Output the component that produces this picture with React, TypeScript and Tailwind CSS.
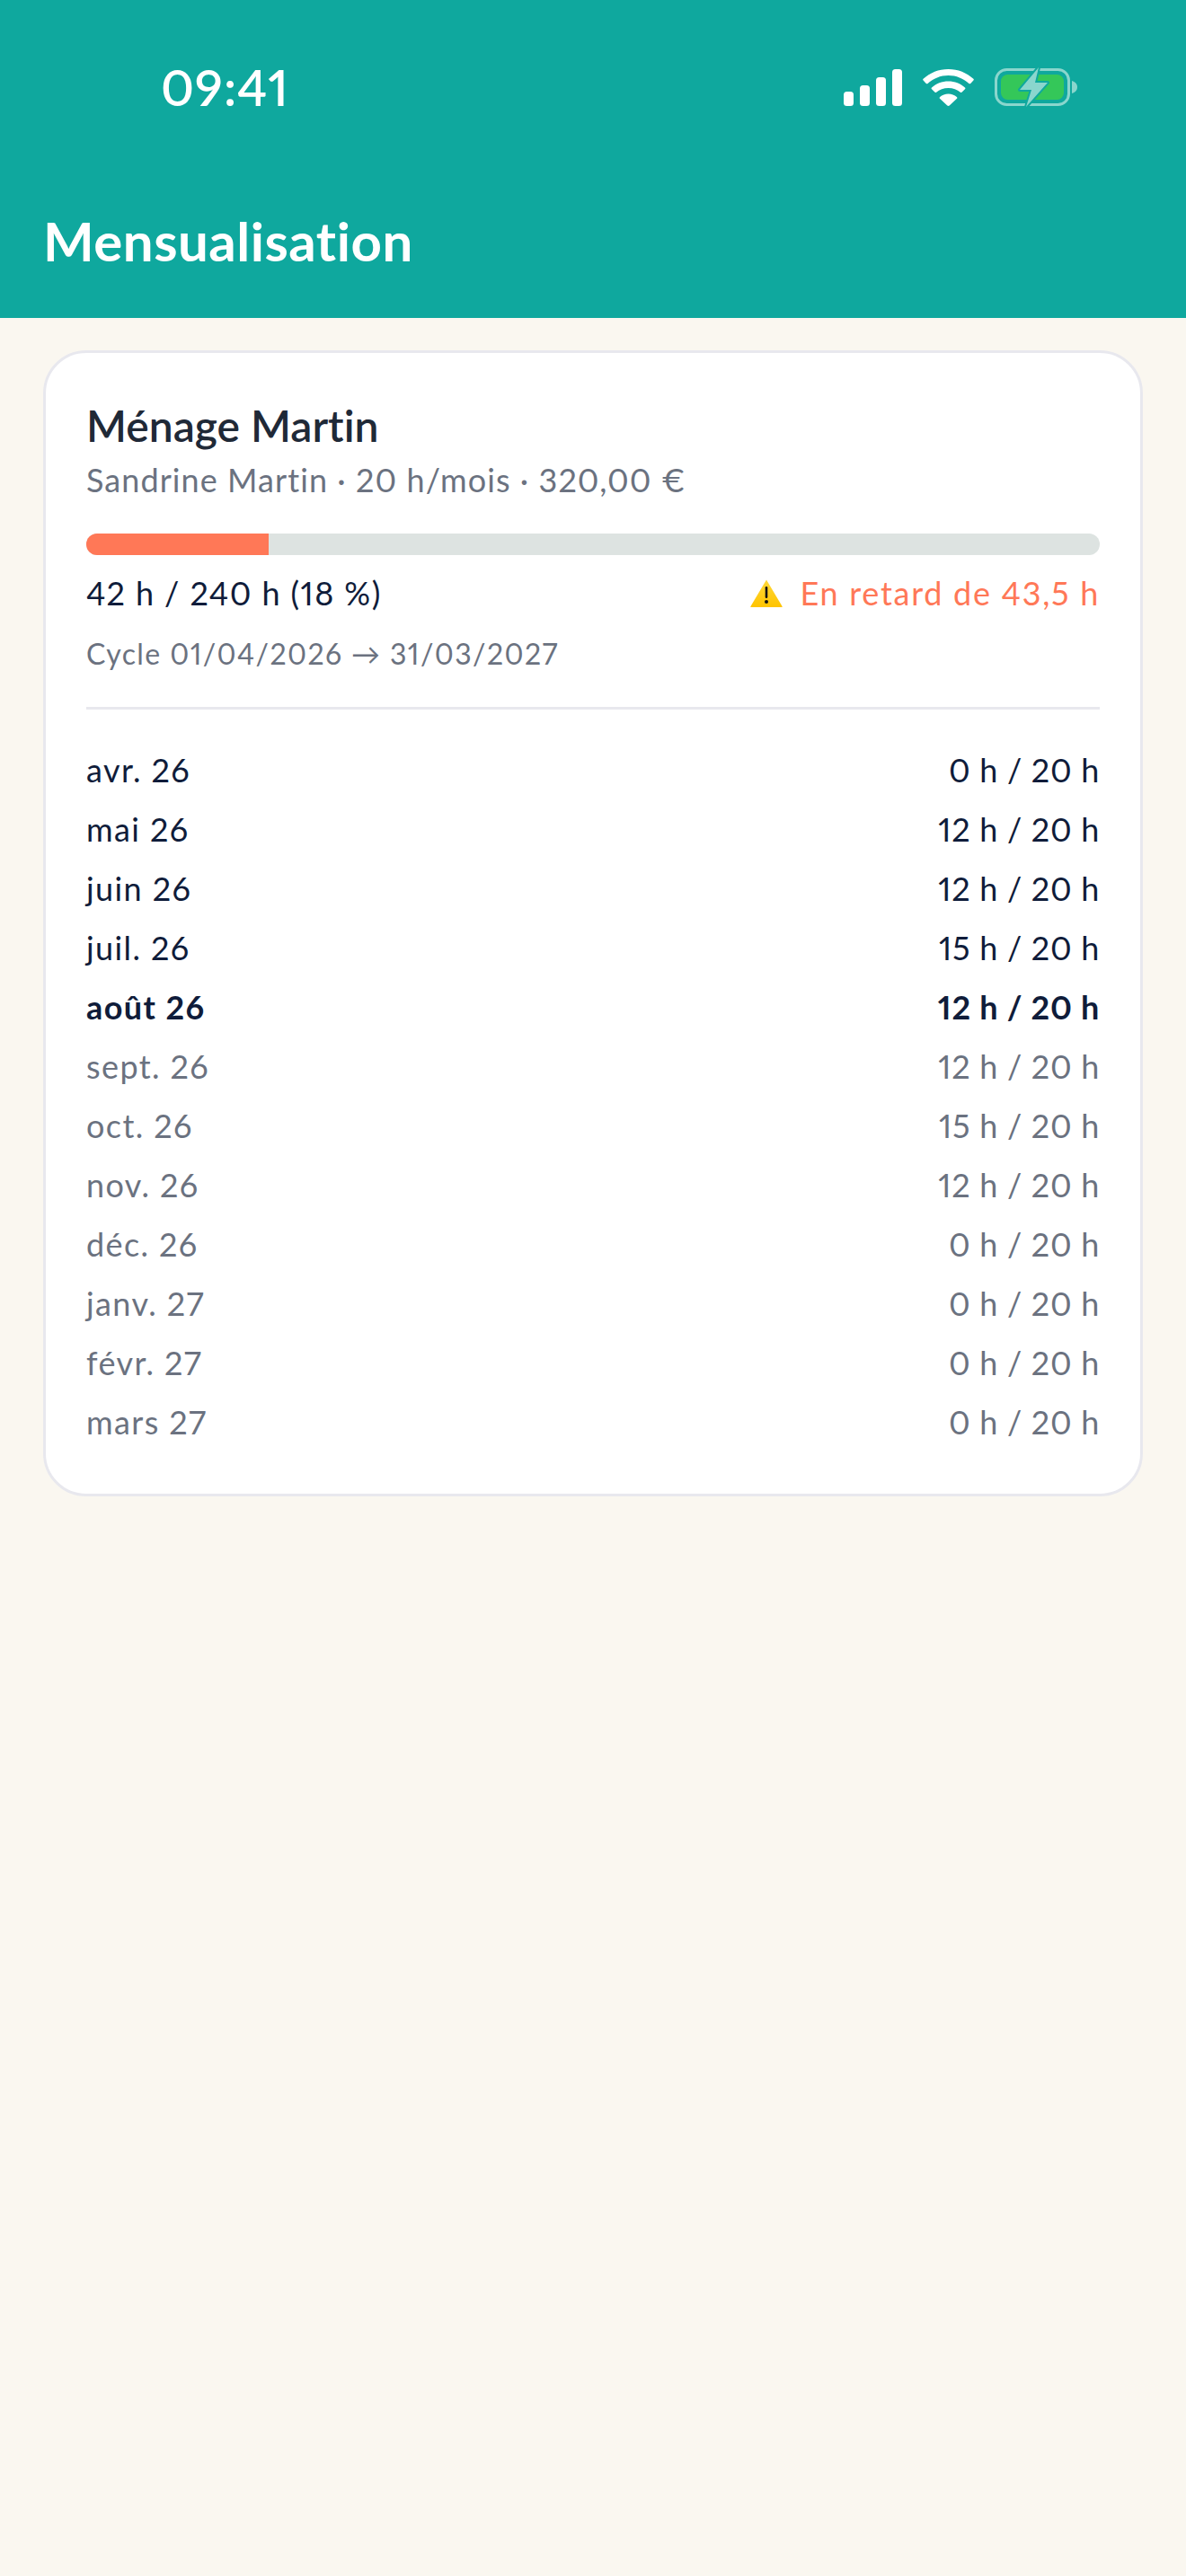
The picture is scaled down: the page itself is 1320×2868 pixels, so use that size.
const MOIS = [
  { label: 'avr. 26', heures: '0 h / 20 h', etat: 'passe' },
  { label: 'mai 26', heures: '12 h / 20 h', etat: 'passe' },
  { label: 'juin 26', heures: '12 h / 20 h', etat: 'passe' },
  { label: 'juil. 26', heures: '15 h / 20 h', etat: 'passe' },
  { label: 'août 26', heures: '12 h / 20 h', etat: 'courant' },
  { label: 'sept. 26', heures: '12 h / 20 h', etat: 'futur' },
  { label: 'oct. 26', heures: '15 h / 20 h', etat: 'futur' },
  { label: 'nov. 26', heures: '12 h / 20 h', etat: 'futur' },
  { label: 'déc. 26', heures: '0 h / 20 h', etat: 'futur' },
  { label: 'janv. 27', heures: '0 h / 20 h', etat: 'futur' },
  { label: 'févr. 27', heures: '0 h / 20 h', etat: 'futur' },
  { label: 'mars 27', heures: '0 h / 20 h', etat: 'futur' },
]

const COULEURS: Record<string, string> = {
  passe: 'text-[#0f1c3a]',
  courant: 'text-[#0f1c3a] font-bold',
  futur: 'text-[#6b7280]',
}

function StatusIcons() {
  return (
    <div className="flex items-center gap-[23px]">
      <svg width="65" height="41" viewBox="0 0 65 41" fill="#fff" aria-hidden>
        <rect x="0" y="25" width="11" height="16" rx="3.5" />
        <rect x="18" y="18" width="11" height="23" rx="3.5" />
        <rect x="36" y="9" width="11" height="32" rx="3.5" />
        <rect x="54" y="0" width="11" height="41" rx="3.5" />
      </svg>
      <svg width="57" height="41" viewBox="0 0 57 41" fill="#fff" aria-hidden>
        <path d="M28.5 0C17.8 0 8 4 .6 10.8c-.6.5-.6 1.2 0 1.8l3.2 3.3c.5.5 1.2.5 1.8 0C11.700 10.400 19.700 7 28.500 7s16.800 3.400 22.900 8.900c.6.5 1.300.5 1.800 0l3.200-3.300c.6-.6.6-1.300 0-1.800C49 4 39.200 0 28.500 0z" />
        <path d="M28.500 13.500c-7.100 0-13.500 2.600-18.500 7-.6.500-.6 1.200 0 1.800l3.300 3.300c.5.500 1.200.500 1.800.1 3.600-3 8.200-4.800 13.400-4.800s9.800 1.800 13.400 4.800c.6.400 1.300.400 1.800-.1l3.300-3.300c.6-.6.600-1.300 0-1.800-5-4.400-11.400-7-18.500-7z" />
        <path d="M28.500 27.500c-3.600 0-6.900 1.300-9.400 3.500-.6.500-.6 1.200-.1 1.800l8.300 7.700c.7.600 1.700.600 2.400 0l8.300-7.700c.5-.6.500-1.300-.1-1.800-2.500-2.200-5.800-3.500-9.400-3.500z" />
      </svg>
      <svg width="93" height="44" viewBox="0 0 93 44" fill="none" aria-hidden>
        <rect x="1.500" y="2.500" width="81" height="39" rx="12" stroke="#8ad6cd" strokeWidth="3" />
        <rect x="7" y="8" width="70" height="28" rx="7.500" fill="#34c759" />
        <path d="M86 15c3.500 1 6 3.500 6 7s-2.500 6-6 7z" fill="#8ad6cd" />
        <path d="M49 0 28 25h13l-6 19 24-27H45z" fill="#8ad6cd" stroke="#0fa89e" strokeWidth="4" strokeLinejoin="round" paintOrder="stroke" />
      </svg>
    </div>
  )
}

export default function App() {
  return (
    <main className="min-h-[2868px] bg-[#faf7f0] font-['Lato',sans-serif] proportional-nums [font-variant-ligatures:none]">
      <header className="flex h-[354px] flex-col bg-[#0fa89e] text-white">
        <div className="flex items-center justify-between pl-[179px] pr-[120px] pt-[70px]">
          <span className="text-[56px] leading-[54px] font-semibold tracking-[1px]">09:41</span>
          <StatusIcons />
        </div>
        <h1 className="mt-[108px] pl-[48px] text-[60px] leading-[72px] font-bold tracking-[0.5px]">Mensualisation</h1>
      </header>

      <section className="mx-[48px] mt-[36px] rounded-[48px] border-[3px] border-[#e8e8ee] bg-white px-[45px] pt-[48px] pb-[47px]">
        <h2 className="text-[48px] leading-[66px] font-semibold text-[#1f2937]">Ménage Martin</h2>
        <p className="text-[36px] leading-[54px] tracking-[1.07px] text-[#6b7280]">Sandrine Martin · 20 h/mois · 320,00 €</p>

        <div className="mt-[33px] h-[24px] overflow-hidden rounded-full bg-[#dde3e1]">
          <div className="h-full w-[18%] bg-[#ff7857]" />
        </div>

        <div className="mt-[15px] flex items-center justify-between">
          <span className="text-[36px] leading-[54px] tracking-[1.4px] text-[#0f1c3a]">42 h / 240 h (18 %)</span>
          <span className="flex items-center gap-[20px] text-[36px] leading-[54px] tracking-[1.7px] text-[#ff7857]">
            <svg width="36" height="31" viewBox="0 0 36 31" aria-hidden>
              <defs>
                <linearGradient id="alerte" x1="0" y1="0" x2="0" y2="1">
                  <stop offset="0" stopColor="#ffd83a" />
                  <stop offset="1" stopColor="#ffc400" />
                </linearGradient>
              </defs>
              <path d="M18 0.500 35.500 30a.6.6 0 0 1-.5 1H1a.6.6 0 0 1-.5-1z" fill="url(#alerte)" />
              <rect x="16.700" y="8" width="2.600" height="13" rx="1.300" fill="#111" />
              <circle cx="18" cy="25" r="2" fill="#111" />
            </svg>
            En retard de 43,5 h
          </span>
        </div>

        <p className="mt-[14px] text-[32px] leading-[54px] tracking-[1.4px] text-[#6b7280]">Cycle 01/04/2026 → 31/03/2027</p>

        <div className="mt-[32px] border-t-[3px] border-[#e8e8ee] pt-[34px]">
          {MOIS.map(m => (
            <div key={m.label} className={`flex h-[66px] items-center justify-between text-[36px] ${COULEURS[m.etat]}`}>
              <span className="tracking-[1.4px]">{m.label}</span>
              <span className="tracking-[0.7px]">{m.heures}</span>
            </div>
          ))}
        </div>
      </section>
    </main>
  )
}
